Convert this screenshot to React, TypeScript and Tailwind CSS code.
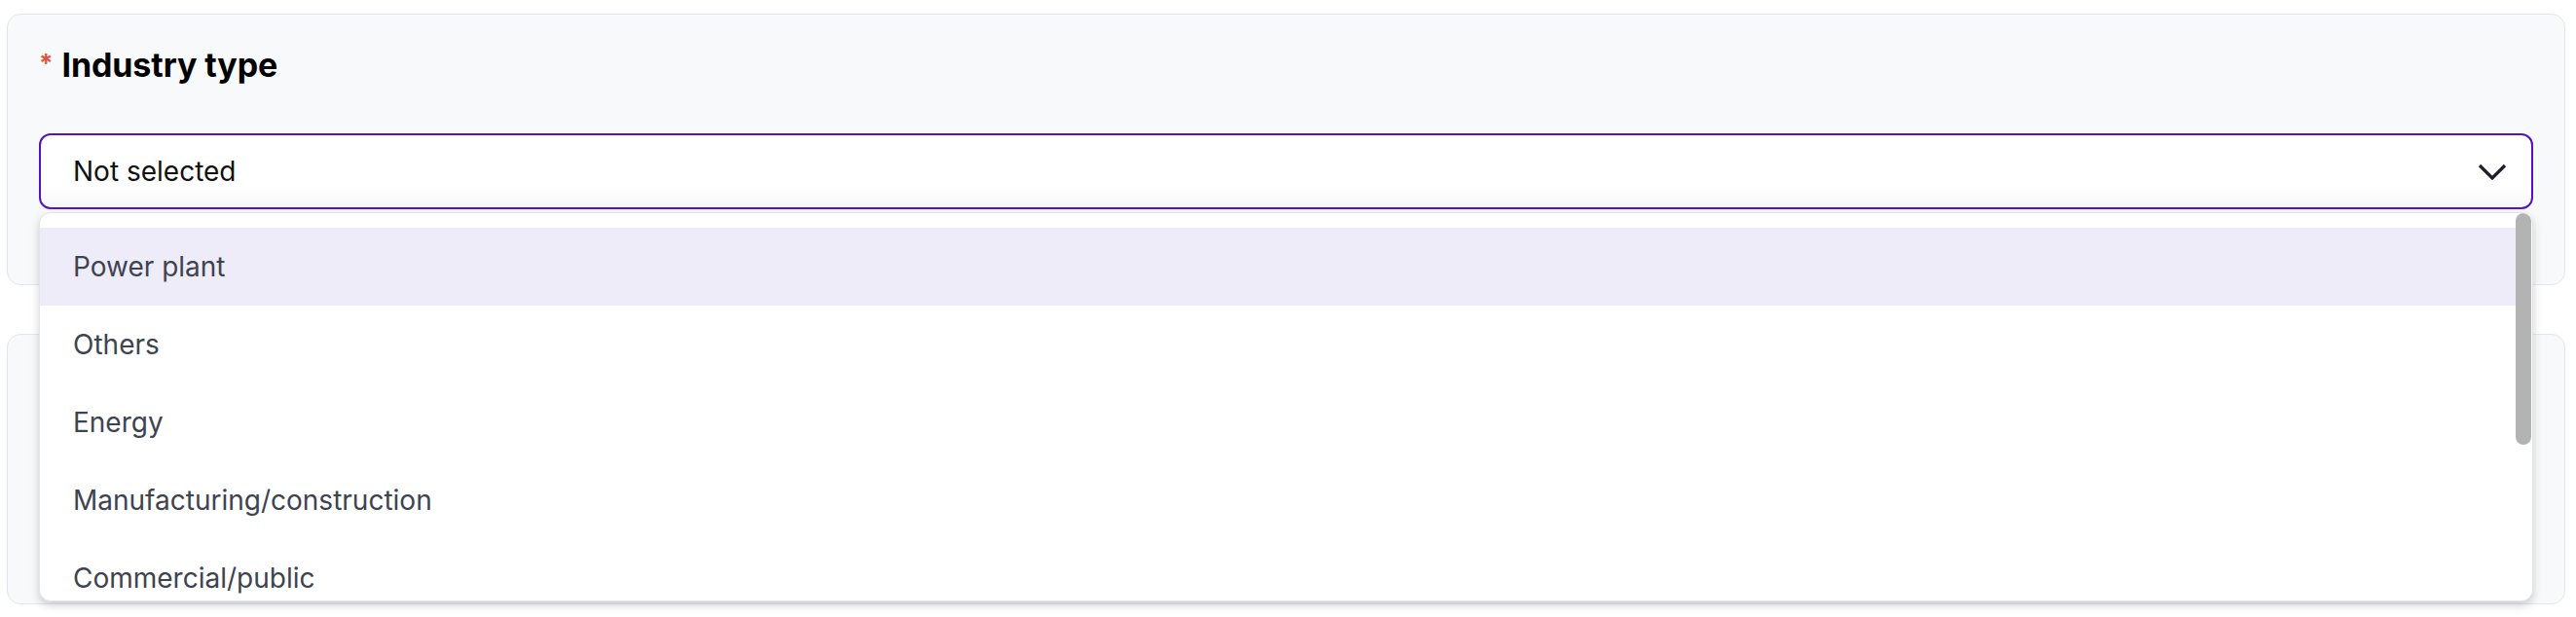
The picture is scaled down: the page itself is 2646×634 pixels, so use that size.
import React, { useState } from 'react';

const OPTIONS = ['Power plant', 'Others', 'Energy', 'Manufacturing/construction', 'Commercial/public'];

const App: React.FC = () => {
  const [hovered, setHovered] = useState(0);

  return (
    <div className="min-h-screen bg-white pl-[7px] pr-[11px] pt-[14px] flex flex-col gap-[50px]" style={{ fontFamily: 'Inter, "Noto Sans", sans-serif' }}>
      <div className="relative z-10 h-[279px] rounded-[14px] border border-[#e3e6ee] bg-[#f8f9fb] px-[32px] pt-[31px]">
        <h2 className="flex items-baseline gap-[9px] text-[34px] leading-[42px] font-bold text-black tracking-[-0.1px]">
          <span className="text-[26px] text-[#e5533d] font-bold relative top-[-5px]">*</span>
          Industry type
        </h2>

        <div className="relative mt-[46px]">
          <button className="w-full h-[78px] flex items-center justify-between rounded-[12px] border-2 border-[#5014c4] bg-gradient-to-b from-white from-70% to-[#f6f6f7] pl-[33px] pr-[25px] text-left">
            <span className="text-[28px] text-[#111111]">Not selected</span>
            <svg width="30" height="17" viewBox="0 0 30 17" fill="none">
              <polyline points="2,2 15,15 28,2" stroke="#1e1f2b" strokeWidth="3.2" strokeLinejoin="miter" />
            </svg>
          </button>

          <div className="absolute left-0 right-0 top-full mt-[3px] h-[400px] rounded-[12px] border border-[#e2e5ec] bg-white shadow-[0_4px_10px_rgba(0,0,0,0.18)] overflow-hidden flex">
            <ul className="flex-1 pt-[15px]">
              {OPTIONS.map((opt, i) => (
                <li
                  key={opt}
                  onMouseEnter={() => setHovered(i)}
                  className={`h-[80px] flex items-center pl-[34px] text-[28px] text-[#3e4350] ${hovered === i ? 'bg-[#efecf9]' : ''}`}
                >
                  {opt}
                </li>
              ))}
            </ul>
            <div className="w-[17px] pr-[1px]">
              <div className="w-[16px] h-[238px] rounded-full bg-[#b3b3b3]" />
            </div>
          </div>
        </div>
      </div>

      <div className="h-[278px] rounded-[14px] border border-[#e3e6ee] bg-[#f8f9fb]" />
    </div>
  );
};

export default App;
